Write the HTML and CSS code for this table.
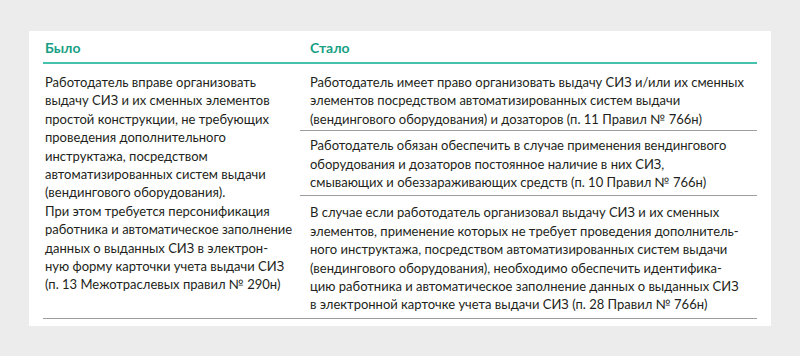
FILE: index.html
```html
<!DOCTYPE html>
<html lang="ru">
<head>
<meta charset="utf-8">
<title>Было / Стало</title>
<link rel="stylesheet" href="styles.css">
</head>
<body>
<div class="card">
  <div class="table">
    <div class="head head-left">Было</div>
    <div class="head head-right">Стало</div>
    <div class="cell cell-left">
      Работодатель вправе организовать<br>
      выдачу СИЗ и их сменных элементов<br>
      простой конструкции, не требующих<br>
      проведения дополнительного<br>
      инструктажа, посредством<br>
      автоматизированных систем выдачи<br>
      (вендингового оборудования).<br>
      При этом требуется персонификация<br>
      работника и автоматическое заполнение<br>
      данных о выданных СИЗ в электрон-<br>
      ную форму карточки учета выдачи СИЗ<br>
      (п. 13 Межотраслевых правил № 290н)
    </div>
    <div class="cell cell-right row1">
      Работодатель имеет право организовать выдачу СИЗ и/или их сменных<br>
      элементов посредством автоматизированных систем выдачи<br>
      (вендингового оборудования) и дозаторов (п. 11 Правил № 766н)
    </div>
    <div class="cell cell-right row2">
      Работодатель обязан обеспечить в случае применения вендингового<br>
      оборудования и дозаторов постоянное наличие в них СИЗ,<br>
      смывающих и обеззараживающих средств (п. 10 Правил № 766н)
    </div>
    <div class="cell cell-right row3">
      В случае если работодатель организовал выдачу СИЗ и их сменных<br>
      элементов, применение которых не требует проведения дополнитель-<br>
      ного инструктажа, посредством автоматизированных систем выдачи<br>
      (вендингового оборудования), необходимо обеспечить идентифика-<br>
      цию работника и автоматическое заполнение данных о выданных СИЗ<br>
      в электронной карточке учета выдачи СИЗ (п. 28 Правил № 766н)
    </div>
  </div>
</div>
</body>
</html>
```

FILE: styles.css
```css
* {
  box-sizing: border-box;
}

html, body {
  margin: 0;
  padding: 0;
}

body {
  background: #ebeceb;
  font-family: Lato, "Liberation Sans", sans-serif;
  color: #231f20;
  padding: 31px 29px 0 29px;
}

.card {
  width: 742px;
  height: 295px;
  background: #ffffff;
  padding: 8px 14px 10px 14px;
}

.table {
  display: grid;
  grid-template-columns: 257px 457px;
  grid-template-rows: auto auto auto 1fr;
}

.head {
  font-weight: bold;
  font-size: 14px;
  line-height: 18px;
  color: #17a085;
  padding: 0 0 5px 0;
  border-bottom: 2px solid #45c2ac;
}

.head-left {
  padding-left: 2px;
}

.head-right {
  padding-left: 10px;
}

.cell {
  font-size: 13px;
  line-height: 18.4px;
  white-space: nowrap;
  border-bottom: 1px solid #9d9d9d;
}

.cell-left {
  grid-column: 1;
  grid-row: 2 / span 3;
  padding: 9px 0 4px 2px;
}

.cell-right {
  grid-column: 2;
  padding: 6px 10px 4px 10px;
}

.row1 {
  grid-row: 2;
  padding-top: 9px;
  padding-bottom: 2px;
}

.row2 {
  grid-row: 3;
  padding-top: 5px;
}

.row3 {
  grid-row: 4;
  padding-top: 7px;
}
```
